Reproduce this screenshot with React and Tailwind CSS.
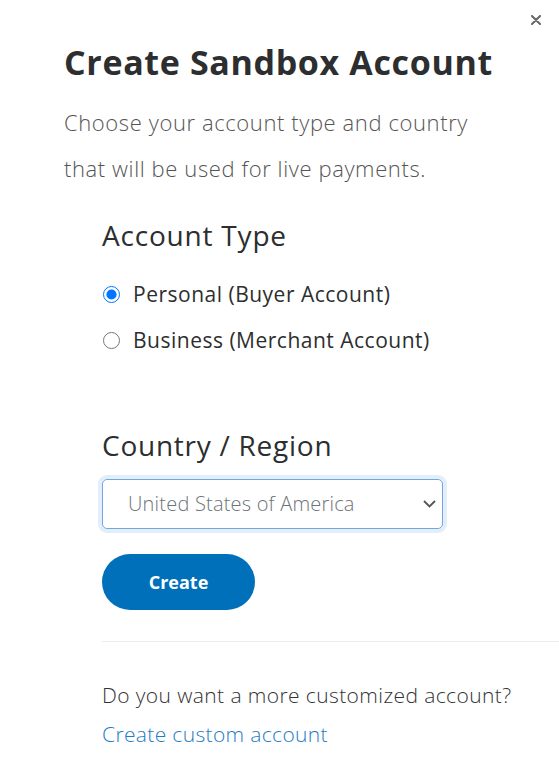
import React, { useState } from "react";

const font = { fontFamily: "'Open Sans', Lato, sans-serif" };

const CloseIcon = () => (
  <svg width="10" height="10" viewBox="0 0 10 10" className="block">
    <path d="M1 1 L9 9 M9 1 L1 9" stroke="#666" strokeWidth="2" strokeLinecap="round" />
  </svg>
);

const Chevron = () => (
  <svg width="13" height="8" viewBox="0 0 13 8" className="block">
    <path d="M1 1 L6.5 6.5 L12 1" fill="none" stroke="#555" strokeWidth="1.8" />
  </svg>
);

const App = () => {
  const [type, setType] = useState("personal");

  return (
    <div className="relative w-[559px] h-[778px] bg-white overflow-hidden" style={font}>
      <button className="absolute left-[531px] top-[15px] p-0">
        <CloseIcon />
      </button>

      <div className="pl-[64px] pt-[42px]">
        <h1 className="text-[34px] leading-[40px] font-bold tracking-[0.65px] text-[#2c2e2f]">
          Create Sandbox Account
        </h1>
        <p className="mt-[17px] text-[22px] leading-[46px] font-light tracking-[0.6px] text-[#555]">
          Choose your account type and country
          <br />
          that will be used for live payments.
        </p>

        <div className="ml-[38px] mt-[26px]">
          <h2 className="text-[28px] leading-[36px] tracking-[0.8px] text-[#2c2e2f]">Account Type</h2>

          <div className="mt-[27px] flex flex-col gap-[18px]">
            <label className="flex items-center gap-[13px] text-[21px] leading-[28px] tracking-[0.5px] text-[#2c2e2f]">
              <input
                type="radio"
                name="type"
                checked={type === "personal"}
                onChange={() => setType("personal")}
                className="w-[17px] h-[17px] m-0 ml-[1px]"
              />
              Personal (Buyer Account)
            </label>
            <label className="flex items-center gap-[13px] text-[21px] leading-[28px] tracking-[0.5px] text-[#2c2e2f]">
              <input
                type="radio"
                name="type"
                checked={type === "business"}
                onChange={() => setType("business")}
                className="w-[17px] h-[17px] m-0 ml-[1px]"
              />
              Business (Merchant Account)
            </label>
          </div>

          <h2 className="mt-[73px] text-[28px] leading-[36px] tracking-[0.75px] text-[#2c2e2f]">
            Country / Region
          </h2>

          <div className="mt-[16px] relative w-[341px] h-[50px] rounded-[5px] border border-[#6fa9de] shadow-[0_0_0_4px_#e3eefa] flex items-center justify-between pl-[25px] pr-[6px]">
            <span className="text-[20px] font-light tracking-[0.2px] text-[#6c7378]">United States of America</span>
            <Chevron />
          </div>

          <button className="mt-[25px] w-[153px] h-[56px] rounded-full bg-[#0070ba] text-white text-[18px] font-bold">
            Create
          </button>

          <div className="mt-[31px] h-px bg-[#eaeced] w-[500px]" />

          <p className="mt-[39px] text-[21px] leading-[28px] font-light tracking-[0.4px] text-[#333]">
            Do you want a more customized account?
          </p>
          <a className="block mt-[11px] text-[21px] leading-[28px] font-light tracking-[0.35px] text-[#1f7cc4]">
            Create custom account
          </a>
        </div>
      </div>
    </div>
  );
};

export default App;
